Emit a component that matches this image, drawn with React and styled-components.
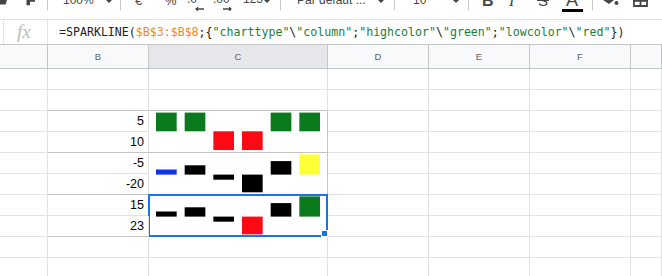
import React from "react";
import styled, { createGlobalStyle } from "styled-components";

const LINE = "#e2e2e2";
const STRONG = "#c4c4c4";
const HEAD_LINE = "#c4c7c5";
const COLS = "48px 101px 179px 101px 101px 101px 1fr";

const Global = createGlobalStyle`
  *, *::before, *::after { box-sizing: border-box; }
  html, body { margin: 0; padding: 0; background: #fff; }
  body { font-family: "Liberation Sans", Arial, sans-serif; }
`;

const Page = styled.div`
  width: 662px;
  height: 276px;
  overflow: hidden;
  display: flex;
  flex-direction: column;
  background: #fff;
`;

/* ---------- toolbar ---------- */
const Toolbar = styled.div`
  height: 20px;
  flex: none;
  display: flex;
  align-items: flex-start;
  overflow: hidden;
  border-bottom: 1px solid #e3e3e3;
  color: #444746;
`;

const Slot = styled.div`
  flex: none;
  width: ${(p) => p.$w}px;
  padding-left: ${(p) => p.$pl || 0}px;
  height: 19px;
  display: flex;
  flex-direction: ${(p) => (p.$col ? "column" : "row")};
  align-items: flex-start;
`;

const Sep = styled.div`
  flex: none;
  width: 1px;
  height: 10px;
  background: #c7c7c7;
`;

const ToolText = styled.span`
  display: block;
  font-family: ${(p) => p.$font || '"Liberation Sans", Arial, sans-serif'};
  font-size: ${(p) => p.$size || 12}px;
  line-height: ${(p) => p.$size || 12}px;
  font-weight: ${(p) => (p.$bold ? 700 : 400)};
  font-style: ${(p) => (p.$italic ? "italic" : "normal")};
  margin-top: ${(p) => p.$mt ?? -6}px;
  padding-left: ${(p) => p.$pl || 0}px;
  white-space: nowrap;
  color: #444746;
`;

const StrikeText = styled(ToolText)`
  position: relative;
  &::after {
    content: "";
    position: absolute;
    left: -1px;
    right: -1px;
    top: 7px;
    height: 1.6px;
    background: #444746;
  }
`;

const ColorBar = styled.div`
  width: 21px;
  height: 3px;
  background: #000;
  margin-top: 0.3px;
`;

const IconSvg = styled.svg`
  display: block;
  flex: none;
  margin-top: ${(p) => p.$mt || 0}px;
  margin-left: ${(p) => p.$ml || 0}px;
`;

const Caret = () => (
  <IconSvg width="10" height="6" viewBox="0 0 10 6" $mt={-2}>
    <polygon points="0,0 10,0 5,5" fill="#444746" />
  </IconSvg>
);

const Arrow = ({ dir, ml }) => (
  <IconSvg width="9" height="4" viewBox="0 0 9 4" $mt={2} $ml={ml}>
    {dir === "left" ? (
      <path d="M9 2H1.2M3 0.3L1 2L3 3.7" stroke="#444746" strokeWidth="1.3" fill="none" />
    ) : (
      <path d="M0 2H7.8M6 0.3L8 2L6 3.7" stroke="#444746" strokeWidth="1.3" fill="none" />
    )}
  </IconSvg>
);

/* ---------- formula bar ---------- */
const FormulaBar = styled.div`
  height: 25px;
  flex: none;
  display: flex;
  border-bottom: 1px solid ${HEAD_LINE};
`;

const BarCap = styled.div`
  width: 4px;
  border-right: 1px solid #e3e3e3;
`;

const FxBox = styled.div`
  width: 44px;
  border-right: 1px solid #e3e3e3;
  padding-left: 13px;
  display: flex;
  align-items: center;
  font-family: "Liberation Serif", "Times New Roman", serif;
  font-style: italic;
  font-size: 19px;
  color: #bdbdbd;
`;

const FormulaText = styled.div`
  flex: 1;
  padding-left: 11px;
  display: flex;
  align-items: center;
  font-family: "DejaVu Sans Mono", monospace;
  font-size: 11.6px;
  white-space: nowrap;
  color: #222;
`;

const Tok = styled.span`
  color: ${(p) => p.$c || "#222"};
`;

/* ---------- grid ---------- */
const HeaderRow = styled.div`
  flex: none;
  height: 24px;
  display: grid;
  grid-template-columns: ${COLS};
  border-bottom: 1px solid ${HEAD_LINE};
`;

const HeadCell = styled.div`
  background: ${(p) => (p.$active ? "#e5e7ea" : "#f8f9fa")};
  border-right: 1px solid ${HEAD_LINE};
  display: flex;
  align-items: center;
  justify-content: center;
  font-family: "Liberation Sans", Arial, sans-serif;
  font-size: 9.5px;
  color: #5f6368;
`;

const Grid = styled.div`
  flex: none;
  display: grid;
  grid-template-columns: ${COLS};
  grid-auto-rows: 21px;
`;

const Cell = styled.div`
  position: relative;
  grid-row: ${(p) => (p.$span ? `span ${p.$span}` : "auto")};
  border-right: 1px solid ${(p) => (p.$sr ? STRONG : LINE)};
  border-bottom: 1px solid ${(p) => (p.$sb ? STRONG : LINE)};
  display: flex;
  align-items: flex-end;
  justify-content: flex-end;
  padding: 0 4px 3px 0;
  font-family: "Liberation Sans", Arial, sans-serif;
  font-size: 12.5px;
  line-height: 14px;
  color: #000;
`;

const SparkCell = styled(Cell)`
  padding: 0;
  display: block;
`;

const Selection = styled.div`
  position: absolute;
  top: -1px;
  left: -1px;
  right: -1px;
  bottom: -1px;
  border: 2px solid #1a73e8;
  pointer-events: none;
`;

const Handle = styled.div`
  position: absolute;
  right: -2px;
  bottom: -2px;
  width: 7px;
  height: 7px;
  background: #1a73e8;
  border: 1px solid #fff;
`;

function Sparkline({ bars, base, unit, extra = 0 }) {
  return (
    <svg width="178" height="41" viewBox="0 0 178 41" style={{ display: "block" }}>
      {bars.map((b, i) => {
        const h = Math.abs(b.v) * unit + extra;
        const y = b.v >= 0 ? base - h : base;
        return <rect key={i} x={7 + i * 28.67} y={y} width={20.67} height={h} fill={b.c} />;
      })}
    </svg>
  );
}

const GREEN = "#0a7a1c";
const RED = "#ff0a14";
const BLACK = "#000";

const SPARKS = {
  3: { bars: [1, 1, -1, -1, 1, 1].map((v) => ({ v, c: v > 0 ? GREEN : RED })), base: 20.3, unit: 18.7, extra: 0 },
  5: {
    bars: [
      { v: 5, c: "#0b32f0" },
      { v: 10, c: BLACK },
      { v: -5, c: BLACK },
      { v: -20, c: BLACK },
      { v: 15, c: BLACK },
      { v: 23, c: "#ffff38" },
    ],
    base: 21.6,
    unit: 0.84,
    extra: 0.9,
  },
  7: {
    bars: [
      { v: 5, c: BLACK },
      { v: 10, c: BLACK },
      { v: -5, c: BLACK },
      { v: -20, c: RED },
      { v: 15, c: BLACK },
      { v: 23, c: GREEN },
    ],
    base: 21.6,
    unit: 0.84,
    extra: 0.9,
  },
};

const VALUES = { 3: "5", 4: "10", 5: "-5", 6: "-20", 7: "15", 8: "23" };

function Body() {
  const cells = [];
  for (let r = 1; r <= 10; r++) {
    const strongB = r === 2 || r === 4 || r === 6 || r === 8;
    cells.push(<Cell key={`A${r}`} />);
    cells.push(
      <Cell key={`B${r}`} $sb={strongB}>
        {VALUES[r] || ""}
      </Cell>
    );
    if (SPARKS[r]) {
      const s = SPARKS[r];
      cells.push(
        <SparkCell key={`C${r}`} $span={2} $sb $sr>
          <Sparkline {...s} />
          {r === 7 && (
            <Selection>
              <Handle />
            </Selection>
          )}
        </SparkCell>
      );
    } else if (!(r === 4 || r === 6 || r === 8)) {
      cells.push(<Cell key={`C${r}`} $sb={r === 2} />);
    }
    ["D", "E", "F", "G"].forEach((c) => cells.push(<Cell key={`${c}${r}`} />));
  }
  return <Grid>{cells}</Grid>;
}

export default function App() {
  return (
    <Page>
      <Global />
      <Toolbar>
        <Slot $w={26}>
          <IconSvg width="8" height="8" viewBox="0 0 8 8">
            <path d="M0 0H7L5.5 4.5H0Z" fill="#444746" />
          </IconSvg>
        </Slot>
        <Slot $w={21}>
          <IconSvg width="10" height="7" viewBox="0 0 10 7">
            <path d="M0.5 0H9V1.8H4V5.2H0.5Z" fill="#444746" />
          </IconSvg>
        </Slot>
        <Sep />
        <Slot $w={56} $pl={15}>
          <ToolText>100%</ToolText>
        </Slot>
        <Slot $w={16}>
          <Caret />
        </Slot>
        <Sep />
        <Slot $w={43} $pl={14}>
          <ToolText $size={13}>€</ToolText>
        </Slot>
        <Slot $w={22} $pl={1}>
          <ToolText $size={13}>%</ToolText>
        </Slot>
        <Slot $w={27} $pl={1} $col>
          <ToolText $mt={-7}>.0</ToolText>
          <Arrow dir="left" ml={8} />
        </Slot>
        <Slot $w={30} $col>
          <ToolText $mt={-7}>.00</ToolText>
          <Arrow dir="right" ml={10} />
        </Slot>
        <Slot $w={19}>
          <ToolText $mt={-7}>123</ToolText>
        </Slot>
        <Slot $w={18}>
          <Caret />
        </Slot>
        <Sep />
        <Slot $w={95} $pl={16}>
          <ToolText>Par défaut ...</ToolText>
        </Slot>
        <Slot $w={18}>
          <Caret />
        </Slot>
        <Sep />
        <Slot $w={56} $pl={18}>
          <ToolText>10</ToolText>
        </Slot>
        <Slot $w={17}>
          <Caret />
        </Slot>
        <Sep />
        <Slot $w={39} $pl={13}>
          <ToolText $size={16} $bold $mt={-7.5}>
            B
          </ToolText>
        </Slot>
        <Slot $w={29} $pl={1}>
          <ToolText $size={16} $italic $font='"Liberation Serif", serif' $mt={-7.5}>
            I
          </ToolText>
        </Slot>
        <Slot $w={25} $pl={1}>
          <StrikeText $size={15} $mt={-7.5}>
            S
          </StrikeText>
        </Slot>
        <Slot $w={30} $col>
          <ToolText $size={18} $mt={-9.2} $pl={4}>
            A
          </ToolText>
          <ColorBar />
        </Slot>
        <Sep />
        <Slot $w={40} $pl={10}>
          <IconSvg width="16" height="7" viewBox="0 0 16 7">
            <polygon points="0,0 11,0 6,4" fill="#444746" />
            <circle cx="13.5" cy="3" r="2" fill="#444746" />
          </IconSvg>
        </Slot>
        <Slot $w={29}>
          <IconSvg width="16" height="8" viewBox="0 0 16 8">
            <path d="M1 -2V6H14V-2M7.5 0V6M0 0.8H15" stroke="#444746" strokeWidth="1.8" fill="none" />
          </IconSvg>
        </Slot>
      </Toolbar>

      <FormulaBar>
        <BarCap />
        <FxBox>fx</FxBox>
        <FormulaText>
          <Tok>=SPARKLINE(</Tok>
          <Tok $c="#ec8a2c">$B$3:$B$8</Tok>
          <Tok>;{"{"}</Tok>
          <Tok $c="#1b7d3a">"charttype"</Tok>
          <Tok>\</Tok>
          <Tok $c="#1b7d3a">"column"</Tok>
          <Tok>;</Tok>
          <Tok $c="#1b7d3a">"highcolor"</Tok>
          <Tok>\</Tok>
          <Tok $c="#1b7d3a">"green"</Tok>
          <Tok>;</Tok>
          <Tok $c="#1b7d3a">"lowcolor"</Tok>
          <Tok>\</Tok>
          <Tok $c="#1b7d3a">"red"</Tok>
          <Tok>{"})"}</Tok>
        </FormulaText>
      </FormulaBar>

      <HeaderRow>
        <HeadCell />
        <HeadCell>B</HeadCell>
        <HeadCell $active>C</HeadCell>
        <HeadCell>D</HeadCell>
        <HeadCell>E</HeadCell>
        <HeadCell>F</HeadCell>
        <HeadCell />
      </HeaderRow>

      <Body />
    </Page>
  );
}
